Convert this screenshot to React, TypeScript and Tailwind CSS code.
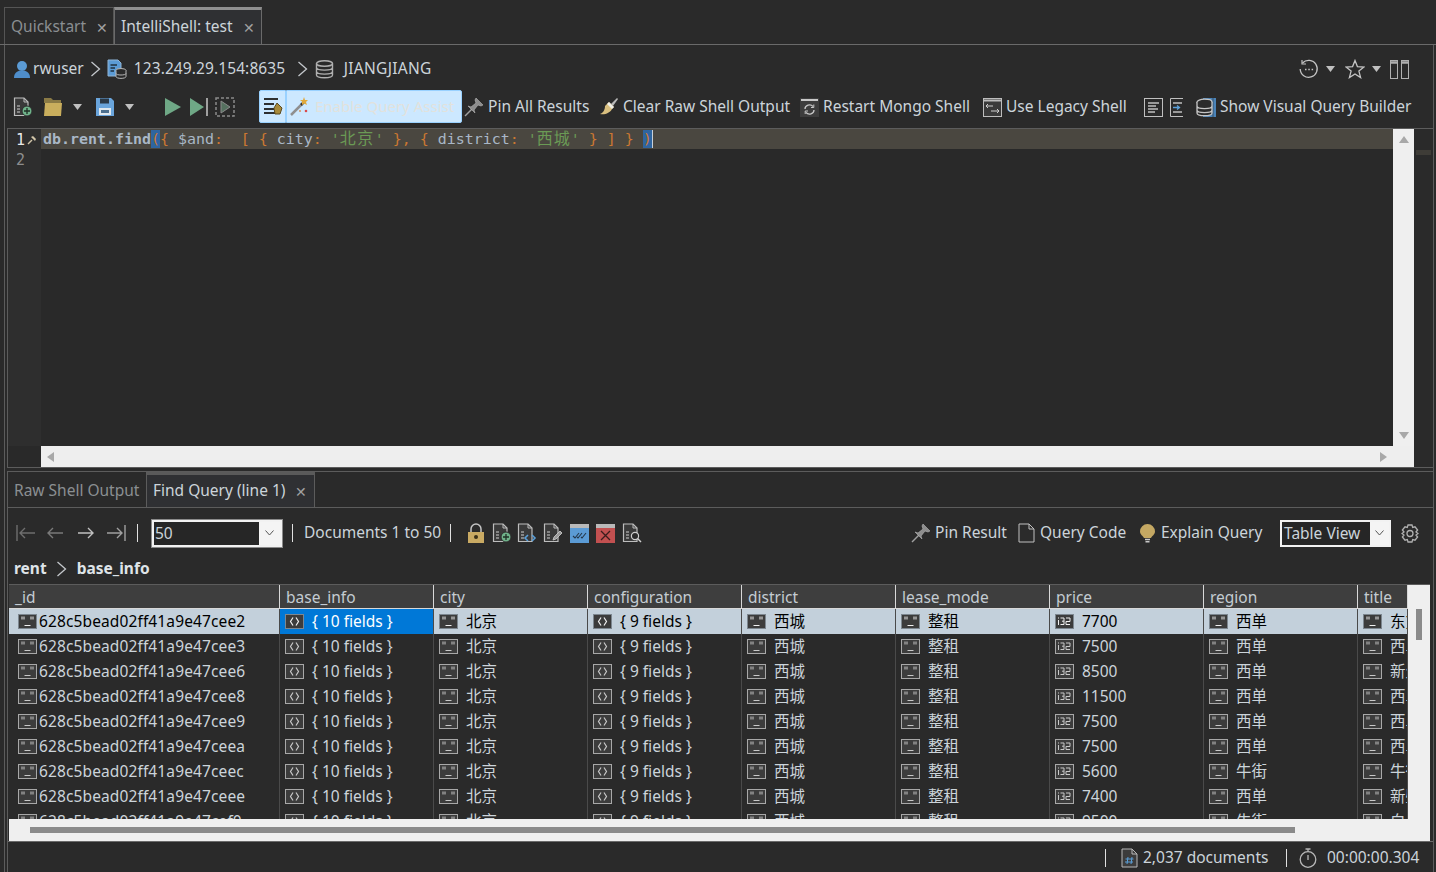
import { ReactNode } from "react";

const rows = [
  ["628c5bead02ff41a9e47cee2", "9 fields", "7700", "西单", "东方"],
  ["628c5bead02ff41a9e47cee3", "9 fields", "7500", "西单", "西单"],
  ["628c5bead02ff41a9e47cee6", "9 fields", "8500", "西单", "新生"],
  ["628c5bead02ff41a9e47cee8", "9 fields", "11500", "西单", "西单"],
  ["628c5bead02ff41a9e47cee9", "9 fields", "7500", "西单", "西单"],
  ["628c5bead02ff41a9e47ceea", "9 fields", "7500", "西单", "西单"],
  ["628c5bead02ff41a9e47ceec", "9 fields", "5600", "牛街", "牛街"],
  ["628c5bead02ff41a9e47ceee", "9 fields", "7400", "西单", "新壁"],
  ["628c5bead02ff41a9e47cef0", "9 fields", "9500", "牛街", "白云"],
];

function Chevron() {
  return (
    <svg width="11" height="16" viewBox="0 0 11 16" fill="none" stroke="#c4c8cc" strokeWidth="1.3">
      <path d="M1.5 1 L9.5 8 L1.5 15" />
    </svg>
  );
}

function Caret() {
  return (
    <svg width="9" height="6" viewBox="0 0 9 6" fill="#c0c0c0">
      <path d="M0 0 H9 L4.5 6 Z" />
    </svg>
  );
}

function UserIcon() {
  return (
    <svg width="18" height="19" viewBox="0 0 18 19">
      <circle cx="9" cy="6" r="5" fill="#5b9bd5" />
      <path d="M1 18 C1 13 4 11.5 6.5 10.5 H11.5 C14 11.5 17 13 17 18 Z" fill="#4f8ecb" />
    </svg>
  );
}

function ServerIcon() {
  return (
    <svg width="20" height="20" viewBox="0 0 20 20" fill="none">
      <path d="M1 1 H11 L14 4 V17 H1 Z" fill="#5b9bd5" stroke="#8fb4d6" />
      <path d="M3.5 6 H10 M3.5 9 H8 M3.5 12 H7" stroke="#20303e" strokeWidth="1.3" />
      <ellipse cx="14" cy="11.5" rx="5" ry="2" fill="#2b2b2b" stroke="#b5b5b5" />
      <path d="M9 11.5 V17.5 C9 20 19 20 19 17.5 V11.5 M9 14.5 C9 16.5 19 16.5 19 14.5" fill="#2b2b2b" stroke="#b5b5b5" />
    </svg>
  );
}

function DbIcon({ size = 19 }: { size?: number }) {
  return (
    <svg width={size} height={size} viewBox="0 0 19 19" fill="none" stroke="#b0b0b0" strokeWidth="1.4">
      <ellipse cx="9.5" cy="3.5" rx="8" ry="2.8" />
      <path d="M1.5 3.5 V15 C1.5 18.6 17.5 18.6 17.5 15 V3.5 M1.5 7.5 C1.5 11 17.5 11 17.5 7.5 M1.5 11.5 C1.5 15 17.5 15 17.5 11.5" />
    </svg>
  );
}

function DocBase({ children }: { children?: ReactNode }) {
  return (
    <svg width="20" height="20" viewBox="0 0 20 20" fill="none">
      <path d="M1.5 1 H11 L15 5 V18.5 H1.5 Z" fill="#3a3a3a" stroke="#bdbdbd" strokeWidth="1.2" />
      <path d="M11 1 V5 H15" stroke="#bdbdbd" />
      <path d="M4 9 H7 M4 12 H7 M4 15 H7" stroke="#cfcfcf" strokeWidth="1.2" />
      {children}
    </svg>
  );
}

function DocPlus() {
  return (
    <DocBase>
      <circle cx="14" cy="14" r="5" fill="#6fb38a" stroke="#2b2b2b" />
      <path d="M14 11 V17 M11 14 H17" stroke="#1f2f25" strokeWidth="1.3" />
    </DocBase>
  );
}

function DocCode() {
  return (
    <DocBase>
      <path d="M11 12 L8 15 L11 18 M15 12 L18 15 L15 18" stroke="#5a9fd8" strokeWidth="1.6" />
    </DocBase>
  );
}

function DocPen() {
  return (
    <DocBase>
      <path d="M10 17 L11 14 L17 8 L19 10 L13 16 Z" fill="#9a9a9a" stroke="#d0d0d0" strokeWidth="0.8" />
    </DocBase>
  );
}

function DocSearch() {
  return (
    <DocBase>
      <circle cx="13" cy="13" r="3.6" fill="#2b2b2b" stroke="#d0d0d0" strokeWidth="1.2" />
      <path d="M15.6 15.6 L19 19" stroke="#d0d0d0" strokeWidth="1.4" />
    </DocBase>
  );
}

function FolderIcon() {
  return (
    <svg width="20" height="20" viewBox="0 0 20 20">
      <path d="M1 1 H8 L10 3 H18 V6 H1 Z" fill="#8a7a45" />
      <path d="M2 6 H19 L18 19 H1 Z" fill="#c9ae5d" />
    </svg>
  );
}

function SaveIcon() {
  return (
    <svg width="20" height="20" viewBox="0 0 20 20">
      <path d="M1 1 H16 L19 4 V19 H1 Z" fill="#6aa5dc" />
      <rect x="5" y="1.5" width="9" height="5" fill="#2b3a48" />
      <rect x="4" y="11" width="12" height="7" fill="#dfe8ef" />
      <rect x="6" y="13" width="8" height="3" fill="#4b6f8f" />
    </svg>
  );
}

function PlayIcon() {
  return (
    <svg width="18" height="20" viewBox="0 0 18 20">
      <path d="M1 1 L17 10 L1 19 Z" fill="#6fa886" />
    </svg>
  );
}

function StepIcon() {
  return (
    <svg width="20" height="20" viewBox="0 0 20 20">
      <path d="M1 1 L15 10 L1 19 Z" fill="#6fa886" />
      <path d="M18 1 V19" stroke="#c8c8c8" strokeWidth="1.5" />
    </svg>
  );
}

function DebugIcon() {
  return (
    <svg width="20" height="20" viewBox="0 0 20 20" fill="none">
      <rect x="1" y="1" width="18" height="18" stroke="#8a8a8a" strokeWidth="1.5" strokeDasharray="3 2" />
      <path d="M6 4 L15 10 L6 16 Z" fill="#55705f" stroke="#8a8a8a" />
    </svg>
  );
}

function AssistIcon() {
  return (
    <svg width="20" height="20" viewBox="0 0 20 20">
      <path d="M1 3 H15 M1 8 H11 M1 13 H11 M1 17 H14" stroke="#2f2f2f" strokeWidth="1.8" />
      <path d="M14 7 L19 12 L17 18 H12 L11 12 Z" fill="#a88a3a" stroke="#5a4a20" />
    </svg>
  );
}

function WandIcon() {
  return (
    <svg width="20" height="20" viewBox="0 0 20 20">
      <path d="M1 19 L12 8" stroke="#8f8f8f" strokeWidth="2.5" />
      <path d="M11 9 L14 6" stroke="#333" strokeWidth="2.5" />
      <path d="M14 1 L15 4 L18 4 L16 6 L17 9 L14 7.5 L12 9 L12 5.5 L10 4 L13 4 Z" fill="#e0a93c" />
      <circle cx="16" cy="15" r="1.3" fill="#d94b4b" />
      <circle cx="10" cy="15" r="0.9" fill="#d98b4b" />
    </svg>
  );
}

function PinIcon() {
  return (
    <svg width="20" height="20" viewBox="0 0 20 20">
      <path d="M1 19 L8 12" stroke="#a0a0a0" strokeWidth="1.5" />
      <path d="M12 1 L19 8 L17 9 L14 8 L10 13 L11 16 L4 9 L7 10 L12 6 L11 3 Z" fill="#8d8d8d" stroke="#b5b5b5" strokeWidth="0.6" />
    </svg>
  );
}

function BrushIcon() {
  return (
    <svg width="20" height="20" viewBox="0 0 20 20">
      <path d="M12 7 L18 1 L19 2 L14 9 Z" fill="#b8b8b8" />
      <path d="M10 5 L15 10 L13 12 C11 16 6 18 1 17 C4 16 6 13 6 9 Z" fill="#d9bf7f" />
      <path d="M10 5 L15 10 L13 12 L8 7 Z" fill="#f0efe8" />
    </svg>
  );
}

function RestartIcon() {
  return (
    <svg width="19" height="19" viewBox="0 0 19 19" fill="none">
      <rect width="19" height="19" fill="#3d3d3d" />
      <path d="M1 2 H18" stroke="#c8c8c8" strokeWidth="2" />
      <path d="M5 11 A4.5 4 0 0 1 13 8.5 M14 12 A4.5 4 0 0 1 6 14.5" stroke="#c8c8c8" strokeWidth="1.3" />
      <path d="M13.8 6.5 V9.5 H11 M5.2 16 V13 H8" stroke="#c8c8c8" strokeWidth="1" />
    </svg>
  );
}

function LegacyIcon() {
  return (
    <svg width="19" height="19" viewBox="0 0 19 19" fill="none">
      <rect x="0.5" y="0.5" width="18" height="18" fill="#3a3a3a" stroke="#bdbdbd" />
      <path d="M1 2.5 H18" stroke="#bdbdbd" strokeWidth="2" />
      <path d="M10 8 H3 M5 6 L3 8 L5 10 M8 13 H16 M14 11 L16 13 L14 15" stroke="#cfcfcf" />
    </svg>
  );
}

function FormatIcon() {
  return (
    <svg width="19" height="19" viewBox="0 0 19 19" fill="none" stroke="#c0c0c0">
      <rect x="0.5" y="0.5" width="18" height="18" strokeWidth="1" />
      <path d="M4 5 H15 M4 8 H12 M4 11 H14 M4 14 H11" strokeWidth="1.3" />
    </svg>
  );
}

function IndentIcon() {
  return (
    <svg width="13" height="19" viewBox="0 0 13 19" fill="none">
      <path d="M13 0.5 H0.5 V18.5 H13" stroke="#c0c0c0" />
      <path d="M3 5 H12 M3 14 H12" stroke="#c0c0c0" strokeWidth="1.3" />
      <path d="M3 9.5 H9 M7 7.5 L9.5 9.5 L7 11.5" stroke="#5a9fd8" strokeWidth="1.3" />
    </svg>
  );
}

function VisualIcon() {
  return (
    <svg width="20" height="19" viewBox="0 0 20 19" fill="none">
      <rect x="7" width="13" height="19" fill="#4a83b8" />
      <path d="M17 0 V19" stroke="#2b2b2b" strokeWidth="0.6" />
      <ellipse cx="8.5" cy="4" rx="7.5" ry="2.8" fill="#2b2b2b" stroke="#c4c4c4" strokeWidth="1.3" />
      <path d="M1 4 V15 C1 18.6 16 18.6 16 15 V4 M1 8 C1 11.5 16 11.5 16 8 M1 12 C1 15.5 16 15.5 16 12" fill="#2b2b2b" stroke="#c4c4c4" strokeWidth="1.3" />
    </svg>
  );
}

function HistoryIcon() {
  return (
    <svg width="20" height="20" viewBox="0 0 20 20" fill="none" stroke="#c4c4c4" strokeWidth="1.3">
      <path d="M3.5 4 A8.5 8.5 0 1 1 1.2 10" />
      <path d="M3 1 V5 H7" strokeWidth="1.2" />
      <path d="M6 10.5 H7.5 M9.3 10.5 H10.8 M12.6 10.5 H14.1" strokeWidth="1.6" />
    </svg>
  );
}

function StarIcon() {
  return (
    <svg width="20" height="20" viewBox="0 0 20 20" fill="none" stroke="#c4c4c4" strokeWidth="1.3">
      <path d="M10 1.5 L12.4 7.6 L19 8 L13.9 12.1 L15.6 18.6 L10 15 L4.4 18.6 L6.1 12.1 L1 8 L7.6 7.6 Z" />
    </svg>
  );
}

function SplitIcon() {
  return (
    <svg width="19" height="19" viewBox="0 0 19 19" fill="none" stroke="#b0b0b0">
      <rect x="0.5" y="0.5" width="7" height="18" />
      <rect x="11.5" y="0.5" width="7" height="18" />
      <path d="M1 2.5 H7 M12 2.5 H18" strokeWidth="2.4" />
    </svg>
  );
}

function FirstIcon({ color }: { color: string }) {
  return (
    <svg width="20" height="18" viewBox="0 0 20 18" fill="none" stroke={color} strokeWidth="1.4">
      <path d="M1 1 V17 M19 9 H4 M9 4 L4 9 L9 14" />
    </svg>
  );
}

function PrevIcon({ color }: { color: string }) {
  return (
    <svg width="18" height="12" viewBox="0 0 18 12" fill="none" stroke={color} strokeWidth="1.4">
      <path d="M17 6 H2 M7 1 L2 6 L7 11" />
    </svg>
  );
}

function NextIcon({ color }: { color: string }) {
  return (
    <svg width="18" height="12" viewBox="0 0 18 12" fill="none" stroke={color} strokeWidth="1.4">
      <path d="M1 6 H16 M11 1 L16 6 L11 11" />
    </svg>
  );
}

function LastIcon({ color }: { color: string }) {
  return (
    <svg width="20" height="18" viewBox="0 0 20 18" fill="none" stroke={color} strokeWidth="1.4">
      <path d="M19 1 V17 M1 9 H16 M11 4 L16 9 L11 14" />
    </svg>
  );
}

function LockIcon() {
  return (
    <svg width="16" height="20" viewBox="0 0 16 20" fill="none">
      <path d="M3 10 V6 A5 5 0 0 1 13 6 V10" stroke="#c4c4c4" strokeWidth="1.5" />
      <rect y="9" width="16" height="11" fill="#c9aa63" />
      <circle cx="8" cy="14" r="2" fill="#3a3018" />
    </svg>
  );
}

function BlueCheckIcon() {
  return (
    <svg width="19" height="19" viewBox="0 0 19 19" fill="none">
      <rect width="19" height="19" fill="#5b9bd5" />
      <rect width="19" height="4" fill="#b9b9b9" />
      <path d="M3 12 L5 14 L9 9 M7 13 L8 14 L12 9 M11 13 L12 14 L16 9" stroke="#24384c" strokeWidth="1.1" />
    </svg>
  );
}

function RedXIcon() {
  return (
    <svg width="19" height="19" viewBox="0 0 19 19" fill="none">
      <rect width="19" height="19" fill="#c25050" />
      <rect width="19" height="4" fill="#b9b9b9" />
      <path d="M5 7 L14 16 M14 7 L5 16" stroke="#3a1c1c" strokeWidth="1.3" />
    </svg>
  );
}

function FileEmptyIcon() {
  return (
    <svg width="18" height="20" viewBox="0 0 18 20" fill="none" stroke="#c0c0c0">
      <path d="M1 1 H11 L16 6 V19 H1 Z" fill="#2b2b2b" />
      <path d="M11 1 V6 H16" />
    </svg>
  );
}

function BulbIcon() {
  return (
    <svg width="17" height="19" viewBox="0 0 17 19">
      <path d="M7.5 0 A7.5 7.5 0 0 1 15 7.5 C15 10.5 12 12 11 14 H4 C3 12 0 10.5 0 7.5 A7.5 7.5 0 0 1 7.5 0 Z" fill="#c4a863" />
      <path d="M5 15.5 H10 M5.5 17.8 H9.5" stroke="#c8c8c8" strokeWidth="1.4" />
    </svg>
  );
}

function GearIcon() {
  return (
    <svg width="18" height="19" viewBox="0 0 18 19" fill="none" stroke="#b0b0b0" strokeWidth="1.3">
      <path d="M7 1 H11 L11.7 3.4 L14 2.8 L16.6 6 L15 8 L17 9.5 L15 11 L16.6 13 L14 16.2 L11.7 15.6 L11 18 H7 L6.3 15.6 L4 16.2 L1.4 13 L3 11 L1 9.5 L3 8 L1.4 6 L4 2.8 L6.3 3.4 Z" />
      <circle cx="9" cy="9.5" r="3" />
    </svg>
  );
}

function HashDocIcon() {
  return (
    <svg width="17" height="20" viewBox="0 0 17 20" fill="none" stroke="#b8b8b8">
      <path d="M1 1 H11 L16 6 V19 H1 Z" fill="#3c3c3c" />
      <path d="M11 1 V6 H16" />
      <path d="M7 9 L6 16 M11 9 L10 16 M4.5 11 H12.5 M4 14 H12" stroke="#5a9fd8" />
    </svg>
  );
}

function ClockIcon() {
  return (
    <svg width="18" height="20" viewBox="0 0 18 20" fill="none" stroke="#b8b8b8" strokeWidth="1.3">
      <circle cx="9" cy="11.5" r="7.8" />
      <path d="M6.5 1 H11.5 M9 1 V3.5 M9 7 V12" />
    </svg>
  );
}

function StrIcon({ active }: { active: boolean }) {
  return (
    <svg width="19" height="15" viewBox="0 0 19 15" fill="none" className="shrink-0">
      <rect x="0.5" y="0.5" width="18" height="14" fill="#3c3c3c" stroke={active ? "#7d8790" : "#a8a8a8"} />
      <path d="M4 2.5 V5.5 M6 2.5 V5.5 M13 2.5 V5.5 M15 2.5 V5.5 M6.5 11.5 H12.5" stroke={active ? "#f0f0f0" : "#c8c8c8"} />
    </svg>
  );
}

function ObjIcon({ active }: { active: boolean }) {
  return (
    <svg width="19" height="15" viewBox="0 0 19 15" fill="none" className="shrink-0">
      <rect x="0.5" y="0.5" width="18" height="14" fill="#3c3c3c" stroke={active ? "#7d8790" : "#a8a8a8"} />
      <path d="M8 3.5 L5.5 7.5 L8 11.5 M11 3.5 L13.5 7.5 L11 11.5" stroke={active ? "#f0f0f0" : "#c8c8c8"} strokeWidth="1.2" />
    </svg>
  );
}

function IntIcon({ active }: { active: boolean }) {
  const c = active ? "#f0f0f0" : "#c8c8c8";
  return (
    <svg width="19" height="15" viewBox="0 0 19 15" fill="none" className="shrink-0">
      <rect x="0.5" y="0.5" width="18" height="14" fill="#3c3c3c" stroke={active ? "#7d8790" : "#a8a8a8"} />
      <path d="M3.5 3.5 V4.5 M3.5 6 V11 M5.5 4 H9 V7.2 H7 M9 7.2 V10.5 H5.5 M11 4 H15 V7.5 H11 V10.5 H15" stroke={c} />
    </svg>
  );
}

function ToolLabel({ icon, label, className }: { icon: ReactNode; label: string; className: string }) {
  return (
    <div className={`flex items-center shrink-0 ${className}`}>
      {icon}
      <span className="ml-[4px] whitespace-nowrap">{label}</span>
    </div>
  );
}

function Cell({ w, active, blue, icon, text }: { w: string; active: boolean; blue?: boolean; icon: ReactNode; text: string }) {
  return (
    <div
      className={`flex items-center h-full shrink-0 overflow-hidden border-r border-[#4a4a4a] pl-[5px] whitespace-nowrap ${w} ${
        blue ? "bg-[#0078d7] text-white" : ""
      }`}
    >
      {icon}
      <span className={`ml-[8px] ${active && !blue ? "text-black" : ""}`}>{text}</span>
    </div>
  );
}

function HeaderCell({ w, label }: { w: string; label: string }) {
  return (
    <div className={`h-full shrink-0 border-r border-[#d8d8d8] pl-[6px] leading-[25px] overflow-hidden ${w}`}>{label}</div>
  );
}

export default function App() {
  return (
    <div className="w-[1436px] h-[872px] overflow-hidden bg-[#2a2a2a] text-[#ccd4da] text-[15.5px] flex flex-col font-['Noto_Sans','Noto_Sans_CJK_SC',sans-serif]">
      {/* editor tabs */}
      <div className="h-[45px] shrink-0 pt-[7px] pl-[4px] flex border-b border-[#6a6a6a]">
        <div className="w-[110px] border border-b-0 border-[#555] flex items-center pl-[6px] pt-[2px] text-[#8a8f92]">
          Quickstart
          <span className="ml-[10px] text-[#a0a0a0] text-[14px]">✕</span>
        </div>
        <div className="w-[148px] border-x border-[#6a6a6a] border-t-[3px] border-t-[#8e8e8e] bg-[#2f3033] flex items-center pl-[6px]">
          IntelliShell: test
          <span className="ml-[10px] text-[#a0a0a0] text-[14px]">✕</span>
        </div>
      </div>

      <div className="flex-1 min-h-0 ml-[4px] mr-[2px] border-x border-[#5c5c5c] flex flex-col">
        {/* connection breadcrumb */}
        <div className="h-[42px] shrink-0 flex items-center pl-[8px] pt-[6px]">
          <UserIcon />
          <span className="ml-[2px]">rwuser</span>
          <span className="ml-[6px]"><Chevron /></span>
          <span className="ml-[6px]"><ServerIcon /></span>
          <span className="ml-[7px] w-[150px] whitespace-nowrap tracking-[0.1px]">123.249.29.154:8635</span>
          <span className="ml-[13px]"><Chevron /></span>
          <span className="ml-[7px]"><DbIcon /></span>
          <span className="ml-[10px] tracking-[0.3px]">JIANGJIANG</span>
          <div className="ml-auto mr-[24px] flex items-center">
            <HistoryIcon />
            <span className="ml-[7px]"><Caret /></span>
            <span className="ml-[10px]"><StarIcon /></span>
            <span className="ml-[7px]"><Caret /></span>
            <span className="ml-[9px]"><SplitIcon /></span>
          </div>
        </div>

        {/* main toolbar */}
        <div className="h-[41px] shrink-0 flex items-center pl-[8px] pb-[1px]">
          <DocPlus />
          <span className="ml-[10px]"><FolderIcon /></span>
          <span className="ml-[10px]"><Caret /></span>
          <span className="ml-[13px]"><SaveIcon /></span>
          <span className="ml-[10px]"><Caret /></span>
          <span className="ml-[30px]"><PlayIcon /></span>
          <span className="ml-[7px]"><StepIcon /></span>
          <span className="ml-[6px]"><DebugIcon /></span>
          <div className="ml-[24px] mb-[2px] h-[33px] w-[27px] shrink-0 bg-[#cce8ff] border border-[#99d1ff] rounded-l-[2px] flex items-center justify-center">
            <AssistIcon />
          </div>
          <div className="mb-[2px] h-[33px] w-[176px] shrink-0 bg-[#cce8ff] border border-[#99d1ff] rounded-r-[2px] flex items-center pl-[3px] text-[#e2e2dc] whitespace-nowrap">
            <WandIcon />
            <span className="ml-[5px] text-[15px]">Enable Query Assist</span>
          </div>
          <ToolLabel className="w-[135px] ml-[2px]" icon={<PinIcon />} label="Pin All Results" />
          <ToolLabel className="w-[201px]" icon={<BrushIcon />} label="Clear Raw Shell Output" />
          <ToolLabel className="w-[183px]" icon={<RestartIcon />} label="Restart Mongo Shell" />
          <ToolLabel className="w-[161px]" icon={<LegacyIcon />} label="Use Legacy Shell" />
          <FormatIcon />
          <span className="ml-[7px]"><IndentIcon /></span>
          <ToolLabel className="ml-[13px]" icon={<VisualIcon />} label="Show Visual Query Builder" />
        </div>

        {/* editor */}
        <div className="h-[340px] shrink-0 ml-[2px] border-y border-l border-[#5c5c5c] flex flex-col">
          <div className="flex-1 min-h-0 flex">
            <div className="w-[33px] shrink-0 bg-[#2e2e2e] font-['DejaVu_Sans_Mono',monospace] text-[15px] leading-[20px] pl-[8px] pt-px text-[#8d8d8d]">
              <div className="flex items-center text-[#e8e8e8]">
                1
                <svg width="10" height="10" viewBox="0 0 10 10" className="ml-[2px]">
                  <path d="M1 9 L5 5" stroke="#d0c4a8" strokeWidth="1.5" />
                  <path d="M4 2 L6 1 L9 4 L8 6 Z" fill="#d0c4a8" />
                </svg>
              </div>
              <div>2</div>
            </div>
            <div className="flex-1 min-w-0 bg-[#292929] overflow-hidden">
              <div className="h-[20px] bg-[#4a4740] font-['DejaVu_Sans_Mono','Noto_Sans_CJK_SC',monospace] text-[14.95px] leading-[21px] pl-[2px] whitespace-pre text-[#a9b7c6]">
                <span className="font-bold">db.rent.find</span>
                <span className="bg-[#2f65a0] text-[#cc7832]">(</span>
                <span className="text-[#cc7832]">{"{"}</span>
                {" $and"}
                <span className="text-[#cc7832]">{":  [ { "}</span>
                {"city"}
                <span className="text-[#cc7832]">: </span>
                <span className="text-[#6a9a55]">'<span className="inline-block w-[35px] text-[16px] tracking-[1.5px] leading-[16px]">北京</span>' </span>
                <span className="text-[#cc7832]">{"}, { "}</span>
                {"district"}
                <span className="text-[#cc7832]">: </span>
                <span className="text-[#6a9a55]">'<span className="inline-block w-[34px] text-[16px] tracking-[1px] leading-[16px]">西城</span>' </span>
                <span className="text-[#cc7832]">{"} ] } "}</span>
                <span className="bg-[#2f65a0] text-[#cc7832] border-r border-[#c8d0d8]">)</span>
              </div>
            </div>
            <div className="w-[21px] shrink-0 bg-[#efefef] flex flex-col items-center justify-between pt-[7px] pb-[7px]">
              <svg width="10" height="7" viewBox="0 0 10 7" fill="#a8a8a8"><path d="M5 0 L10 7 H0 Z" /></svg>
              <svg width="10" height="7" viewBox="0 0 10 7" fill="#a8a8a8"><path d="M5 7 L10 0 H0 Z" /></svg>
            </div>
            <div className="w-[19px] shrink-0 pt-[21px] px-[2px]">
              <div className="h-[5px] bg-[#3e3c37]" />
            </div>
          </div>
          <div className="h-[21px] shrink-0 flex">
            <div className="w-[33px] shrink-0 bg-[#292929]" />
            <div className="w-[1373px] shrink-0 bg-[#eeeeee] flex items-center justify-between pl-[6px] pr-[27px]">
              <svg width="7" height="10" viewBox="0 0 7 10" fill="#a8a8a8"><path d="M0 5 L7 0 V10 Z" /></svg>
              <svg width="7" height="10" viewBox="0 0 7 10" fill="#a8a8a8"><path d="M7 5 L0 0 V10 Z" /></svg>
            </div>
          </div>
        </div>

        {/* results */}
        <div className="flex-1 min-h-0 mt-[3px] ml-[2px] border-l border-[#5c5c5c] flex flex-col">
          <div className="h-[37px] shrink-0 flex border-y border-[#5c5c5c]">
            <div className="w-[139px] pl-[6px] pt-[2px] flex items-center border-r border-[#5c5c5c] text-[#8a8f92] whitespace-nowrap">
              Raw Shell Output
            </div>
            <div className="w-[168px] pl-[6px] flex items-center border-r border-[#5c5c5c] border-t-[3px] border-t-[#5a5a5a] bg-[#2f3033] whitespace-nowrap">
              Find Query (line 1)
              <span className="ml-[10px] text-[#a0a0a0] text-[14px]">✕</span>
            </div>
          </div>

          {/* result toolbar */}
          <div className="h-[47px] shrink-0 flex items-center pl-[8px] pt-[3px]">
            <FirstIcon color="#6e6e6e" />
            <span className="ml-[10px]"><PrevIcon color="#7a7a7a" /></span>
            <span className="ml-[13px]"><NextIcon color="#c0c0c0" /></span>
            <span className="ml-[11px]"><LastIcon color="#a0a0a0" /></span>
            <span className="ml-[11px] w-px h-[18px] bg-[#e0e0e0]" />
            <div className="ml-[14px] w-[130px] h-[27px] shrink-0 border-2 border-[#f2f2f2] outline outline-1 outline-[#8a8a8a] flex items-center bg-[#f4f4f4]">
              <div className="w-[105px] h-full bg-[#262626] pl-[1px] leading-[22px]">50</div>
              <div className="flex-1 flex justify-center">
                <svg width="9" height="6" viewBox="0 0 9 6" fill="none" stroke="#555"><path d="M0.5 0.5 L4.5 5 L8.5 0.5" /></svg>
              </div>
            </div>
            <span className="ml-[10px] w-px h-[18px] bg-[#e0e0e0]" />
            <span className="ml-[11px] w-[146px] whitespace-nowrap">Documents 1 to 50</span>
            <span className="w-px h-[18px] bg-[#e0e0e0]" />
            <span className="ml-[17px]"><LockIcon /></span>
            <span className="ml-[8px]"><DocPlus /></span>
            <span className="ml-[5px]"><DocCode /></span>
            <span className="ml-[6px]"><DocPen /></span>
            <span className="ml-[7px]"><BlueCheckIcon /></span>
            <span className="ml-[7px]"><RedXIcon /></span>
            <span className="ml-[7px]"><DocSearch /></span>
            <ToolLabel className="ml-[269px] w-[107px]" icon={<PinIcon />} label="Pin Result" />
            <ToolLabel className="w-[122px]" icon={<FileEmptyIcon />} label="Query Code" />
            <ToolLabel className="w-[140px]" icon={<BulbIcon />} label="Explain Query" />
            <div className="w-[111px] h-[27px] shrink-0 border-2 border-[#f2f2f2] flex items-center bg-[#f4f4f4]">
              <div className="w-[88px] h-full bg-[#262626] pl-[2px] leading-[22px] whitespace-nowrap">Table View</div>
              <div className="flex-1 flex justify-center">
                <svg width="9" height="6" viewBox="0 0 9 6" fill="none" stroke="#555"><path d="M0.5 0.5 L4.5 5 L8.5 0.5" /></svg>
              </div>
            </div>
            <span className="ml-[10px]"><GearIcon /></span>
          </div>

          <div className="h-[29px] shrink-0 flex items-center pl-[6px] pb-[2px] font-bold text-[#dfe4e8]">
            rent
            <span className="ml-[9px] mr-[10px]"><Chevron /></span>
            base_info
          </div>

          {/* table */}
          <div className="h-[257px] shrink-0 ml-px w-[1421px] flex flex-col border-t border-[#5c5c5c]">
            <div className="flex-1 min-h-0 flex">
              <div className="w-[1399px] shrink-0 overflow-hidden">
                <div className="h-[24px] flex bg-[#3e3e3e] border-b border-[#d8d8d8] text-[#c4ccd2]">
                  <HeaderCell w="w-[271px]" label="_id" />
                  <HeaderCell w="w-[154px]" label="base_info" />
                  <HeaderCell w="w-[154px]" label="city" />
                  <HeaderCell w="w-[154px]" label="configuration" />
                  <HeaderCell w="w-[154px]" label="district" />
                  <HeaderCell w="w-[154px]" label="lease_mode" />
                  <HeaderCell w="w-[154px]" label="price" />
                  <HeaderCell w="w-[154px]" label="region" />
                  <HeaderCell w="w-[50px]" label="title" />
                </div>
                {rows.map((r, i) => {
                  const active = i === 0;
                  return (
                    <div key={r[0]} className={`h-[25px] flex ${active ? "bg-[#c3d0db]" : ""}`}>
                      <div className={`flex items-center h-full w-[271px] shrink-0 border-r border-[#4a4a4a] pl-[9px] ${active ? "text-black" : ""}`}>
                        <StrIcon active={active} />
                        <span className="ml-[2px] tracking-[0.12px]">{r[0]}</span>
                      </div>
                      <Cell w="w-[154px]" active={active} blue={active} icon={<ObjIcon active={active} />} text="{ 10 fields }" />
                      <Cell w="w-[154px]" active={active} icon={<StrIcon active={active} />} text="北京" />
                      <Cell w="w-[154px]" active={active} icon={<ObjIcon active={active} />} text={`{ ${r[1]} }`} />
                      <Cell w="w-[154px]" active={active} icon={<StrIcon active={active} />} text="西城" />
                      <Cell w="w-[154px]" active={active} icon={<StrIcon active={active} />} text="整租" />
                      <Cell w="w-[154px]" active={active} icon={<IntIcon active={active} />} text={r[2]} />
                      <Cell w="w-[154px]" active={active} icon={<StrIcon active={active} />} text={r[3]} />
                      <Cell w="w-[50px]" active={active} icon={<StrIcon active={active} />} text={r[4]} />
                    </div>
                  );
                })}
              </div>
              <div className="w-[22px] shrink-0 bg-[#efefef] pt-[24px] pl-[8px]">
                <div className="w-[6px] h-[31px] bg-[#8a8a8a]" />
              </div>
            </div>
            <div className="h-[22px] shrink-0 bg-[#efefef] flex items-center pl-[21px]">
              <div className="w-[1265px] h-[6px] bg-[#8a8a8a]" />
            </div>
          </div>

          {/* status bar */}
          <div className="flex-1 min-h-0 border-t border-[#6a6a6a] pt-[2px] flex items-center">
            <span className="ml-[1097px] w-px h-[18px] bg-[#e0e0e0]" />
            <span className="ml-[15px]"><HashDocIcon /></span>
            <span className="ml-[5px] w-[143px] whitespace-nowrap">2,037 documents</span>
            <span className="w-px h-[18px] bg-[#e0e0e0]" />
            <span className="ml-[12px]"><ClockIcon /></span>
            <span className="ml-[10px] whitespace-nowrap">00:00:00.304</span>
          </div>
        </div>
      </div>
    </div>
  );
}
